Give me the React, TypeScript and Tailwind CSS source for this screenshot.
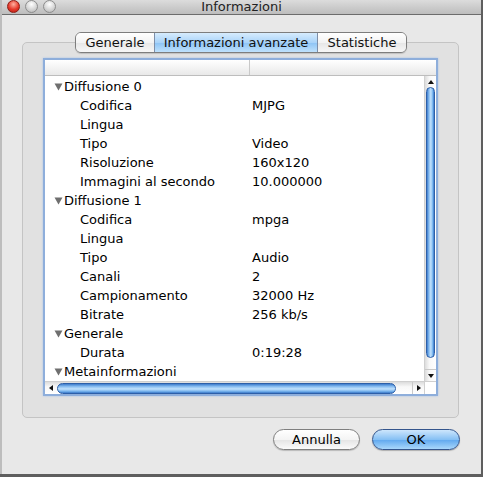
import React from "react";

type Row = { label: string; value?: string; group?: boolean };

const rows: Row[] = [
  { label: "Diffusione 0", group: true },
  { label: "Codifica", value: "MJPG" },
  { label: "Lingua", value: "" },
  { label: "Tipo", value: "Video" },
  { label: "Risoluzione", value: "160x120" },
  { label: "Immagini al secondo", value: "10.000000" },
  { label: "Diffusione 1", group: true },
  { label: "Codifica", value: "mpga" },
  { label: "Lingua", value: "" },
  { label: "Tipo", value: "Audio" },
  { label: "Canali", value: "2" },
  { label: "Campionamento", value: "32000 Hz" },
  { label: "Bitrate", value: "256 kb/s" },
  { label: "Generale", group: true },
  { label: "Durata", value: "0:19:28" },
  { label: "Metainformazioni", group: true },
];

const font = { fontFamily: '"DejaVu Sans", "Lucida Grande", sans-serif' };

function Disclosure() {
  return (
    <svg width="9" height="8" viewBox="0 0 9 8" className="shrink-0">
      <path d="M0.5 0.5 L8.5 0.5 L4.5 7.5 Z" fill="#6f6f6f" />
    </svg>
  );
}

function Arrow({ dir }: { dir: "up" | "down" | "left" | "right" }) {
  const d =
    dir === "up"
      ? "M1 5 L7 5 L4 1 Z"
      : dir === "down"
      ? "M1 1 L7 1 L4 5 Z"
      : dir === "left"
      ? "M5 1 L5 7 L1 4 Z"
      : "M1 1 L1 7 L5 4 Z";
  const vertical = dir === "up" || dir === "down";
  return (
    <svg width={vertical ? 8 : 6} height={vertical ? 6 : 8} viewBox={vertical ? "0 0 8 6" : "0 0 6 8"}>
      <path d={d} fill="#111" />
    </svg>
  );
}

function TrafficLight({ red }: { red?: boolean }) {
  return (
    <div
      className={
        red
          ? "w-[13px] h-[13px] rounded-full border border-[#8e1c14] bg-[radial-gradient(circle_at_50%_30%,#ffb0a0,#e5392b_55%,#b41a10)]"
          : "w-[13px] h-[13px] rounded-full border border-[#8d8d8d] bg-[radial-gradient(circle_at_50%_30%,#ffffff,#d6d6d6_55%,#b0b0b0)]"
      }
    />
  );
}

export default function App() {
  return (
    <div className="w-[483px] h-[477px] bg-[#5e5e5e] overflow-hidden" style={font}>
      <div className="w-[481px] h-[474px] bg-[#e8e8e8] flex flex-col border-l-2 border-[#bdbdbd]">
        {/* title bar */}
        <div className="h-[15px] shrink-0 relative flex items-center bg-linear-to-b from-[#dcdcdc] to-[#bdbdbd] border-b border-[#6c6c6c]">
          <div className="flex items-center gap-[5px] pl-[5px] -mt-[1px]">
            <TrafficLight red />
            <TrafficLight />
            <TrafficLight />
          </div>
          <div className="absolute inset-0 flex items-center justify-center text-[13px] text-[#222] leading-none -mt-[2px]">
            Informazioni
          </div>
        </div>

        {/* tab group */}
        <div className="relative mt-[27px] ml-[20px] w-[437px] h-[376px] rounded-[5px] border border-[#c4c4c4] bg-[#e1e1e1] pt-[15px] pl-[20px]">
          <div className="absolute left-[52px] -top-[11px] h-[21px] flex rounded-[6px] border border-[#7d7d7d] overflow-hidden text-[13px] text-[#111] shadow-[0_1px_1px_rgba(0,0,0,0.15)]">
            <div className="w-[78px] flex items-center justify-center bg-[linear-gradient(to_bottom,#ffffff,#f3f3f3_50%,#e6e6e6_51%,#f7f7f7)]">
              Generale
            </div>
            <div className="w-[164px] flex items-center justify-center border-x border-[#7d8ea8] bg-[linear-gradient(to_bottom,#d7ecfd,#a9d3f9_50%,#8cc3f5_51%,#bfe1fc)]">
              Informazioni avanzate
            </div>
            <div className="w-[88px] flex items-center justify-center bg-[linear-gradient(to_bottom,#ffffff,#f3f3f3_50%,#e6e6e6_51%,#f7f7f7)]">
              Statistiche
            </div>
          </div>

          {/* outline view */}
          <div className="w-[395px] h-[338px] border-2 border-[#8eaedb] bg-white flex flex-col shadow-[0_0_2px_#a9c4ea]">
            <div className="h-[16px] shrink-0 flex bg-linear-to-b from-[#ffffff] to-[#e9e9e9] border-b border-[#bdbdbd]">
              <div className="w-[205px] border-r border-[#c9c9c9]" />
              <div className="flex-1" />
            </div>
            <div className="flex flex-1 min-h-0">
              <div className="flex-1 flex flex-col text-[13px] text-black pt-[1px]">
                {rows.map((r, i) => (
                  <div key={i} className="h-[19px] flex items-center leading-none">
                    {r.group ? (
                      <div className="flex items-center pl-[9px]">
                        <Disclosure />
                        <span className="ml-[1px]">{r.label}</span>
                      </div>
                    ) : (
                      <>
                        <span className="pl-[35px] w-[207px] shrink-0">{r.label}</span>
                        <span>{r.value}</span>
                      </>
                    )}
                  </div>
                ))}
              </div>
              {/* vertical scroller */}
              <div className="w-[12px] shrink-0 flex flex-col bg-[linear-gradient(to_right,#dcdcdc,#f8f8f8_40%,#ffffff)] border-l border-[#d0d0d0]">
                <div className="h-[11px] flex items-center justify-center">
                  <Arrow dir="up" />
                </div>
                <div className="h-[271px] mx-[1px] rounded-full border border-[#2d5fa8] bg-[linear-gradient(to_right,#3d7ccd,#8cc0f2_30%,#c3e2fc_55%,#7ab6ef_80%,#3a78c9)]" />
                <div className="flex-1" />
                <div className="h-[12px] flex items-center justify-center border-t border-[#c9c9c9]">
                  <Arrow dir="down" />
                </div>
              </div>
            </div>
            {/* horizontal scroller */}
            <div className="h-[13px] shrink-0 flex items-center border-t border-[#cfcfcf] bg-[linear-gradient(to_bottom,#dcdcdc,#f8f8f8_40%,#ffffff)]">
              <div className="w-[12px] flex items-center justify-center">
                <Arrow dir="left" />
              </div>
              <div className="w-[339px] h-[11px] rounded-full border border-[#2d5fa8] bg-[linear-gradient(to_bottom,#3d7ccd,#8cc0f2_30%,#c3e2fc_55%,#7ab6ef_80%,#3a78c9)]" />
              <div className="flex-1" />
              <div className="w-[12px] h-full flex items-center justify-center border-l border-[#c9c9c9]">
                <Arrow dir="right" />
              </div>
              <div className="w-[12px] h-full bg-white border-l border-[#d0d0d0]" />
            </div>
          </div>
        </div>

        {/* buttons */}
        <div className="flex justify-end gap-[12px] pr-[21px] mt-[11px] text-[13px] text-black">
          <button className="w-[87px] h-[21px] rounded-full border border-[#7f7f7f] bg-[linear-gradient(to_bottom,#ffffff,#f4f4f4_50%,#e4e4e4_51%,#fbfbfb)] shadow-[0_1px_1px_rgba(0,0,0,0.2)] leading-none">
            Annulla
          </button>
          <button className="w-[88px] h-[21px] rounded-full border border-[#34558c] bg-[linear-gradient(to_bottom,#cde6fc,#86c0f4_50%,#5fa7ee_51%,#a9d7fb)] shadow-[0_1px_1px_rgba(0,0,0,0.25)] leading-none">
            OK
          </button>
        </div>
      </div>
    </div>
  );
}
